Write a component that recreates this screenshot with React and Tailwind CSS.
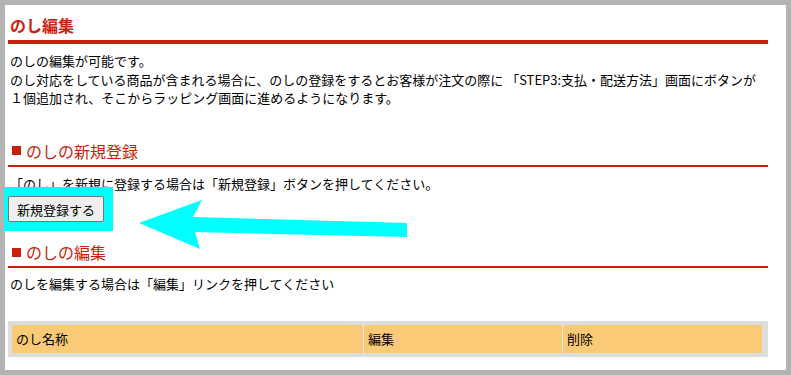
const columns = [
  { label: "のし名称", width: "w-[352px]" },
  { label: "編集", width: "w-[199px]" },
  { label: "削除", width: "w-[199px]" },
];

const SectionHeader = ({ children, className = "" }) => (
  <div className={`flex items-center pl-[4px] pb-[4px] border-b-2 border-[#c81e0a] text-[16px] leading-[20px] text-[#c81e0a] ${className}`}>
    <span className="inline-block w-[9px] h-[9px] bg-[#c81e0a] mr-[5px]"></span>
    {children}
  </div>
);

const App = () => {
  return (
    <div className="relative w-[791px] h-[375px] bg-[#b3b3b3] p-[5px] overflow-hidden" style={{ fontFamily: '"Noto Sans CJK JP", "Noto Sans", sans-serif' }}>
      <div className="h-[365px] bg-white pl-[3px] pr-[18px] text-[13px] text-black">
        {/* Page title */}
        <div className="pl-[2px] pt-[10px] pb-[5px] border-b-4 border-[#c81e0a] text-[16px] leading-[20px] font-bold text-[#cc2211]">
          のし編集
        </div>

        <p className="mt-[8px] pl-[2px] leading-[18.5px] whitespace-nowrap">
          のしの編集が可能です。
          <br />
          のし対応をしている商品が含まれる場合に、のしの登録をするとお客様が注文の際に 「STEP3:支払・配送方法」画面にボタンが
          <br />
          １個追加され、そこからラッピング画面に進めるようになります。
        </p>

        {/* New registration */}
        <SectionHeader className="mt-[33px]">のしの新規登録</SectionHeader>
        <p className="mt-[8px] pl-[2px] leading-[18.5px]">「のし」を新規に登録する場合は「新規登録」ボタンを押してください。</p>
        <div className="relative mt-[3px] w-[96px]">
          <div className="absolute -top-[9px] -left-[4px] -right-[9px] -bottom-[9px] bg-[#00ffff]"></div>
          <button className="relative z-10 w-[96px] h-[26px] bg-[#efefef] border border-[#767676] rounded-[2px] text-[13px] leading-none text-black">
            新規登録する
          </button>
        </div>

        {/* Edit */}
        <SectionHeader className="mt-[20px]">のしの編集</SectionHeader>
        <p className="mt-[7px] pl-[2px] leading-[18.5px]">のしを編集する場合は「編集」リンクを押してください</p>

        <div className="mt-[27px] w-[760px] bg-[#dddddd] p-[4px]">
          <div className="flex">
            {columns.map((col, i) => (
              <div
                key={col.label}
                className={`${col.width} h-[28px] flex items-center pl-[4px] bg-[#fbca77] text-[13px] ${i < columns.length - 1 ? "border-r border-[#eeeeee]" : ""}`}
              >
                {col.label}
              </div>
            ))}
          </div>
        </div>
      </div>

      {/* Annotation arrow */}
      <svg className="absolute left-0 top-0 pointer-events-none" width="791" height="375" viewBox="0 0 791 375">
        <polygon
          points="139,223 202,200 193,217 407,223 407,237 195,232 200,249"
          fill="#00ffff"
        />
      </svg>
    </div>
  );
};

export default App;
